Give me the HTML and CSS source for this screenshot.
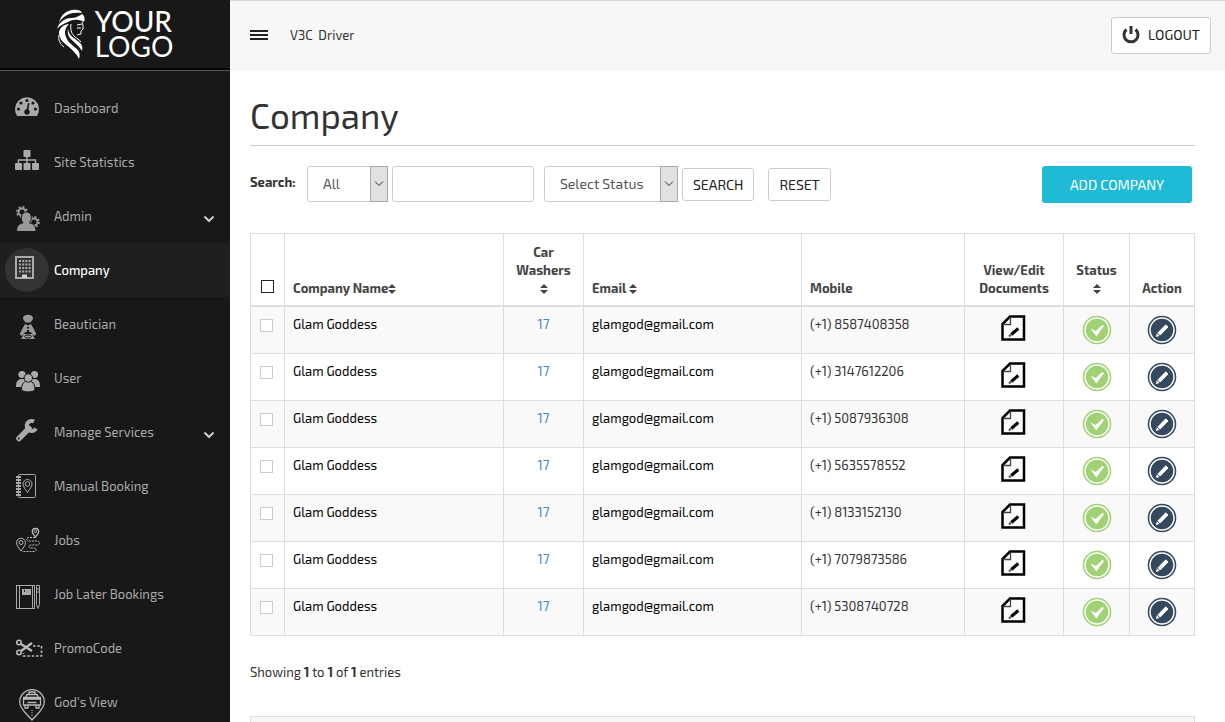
FILE: index.html
```html
<!DOCTYPE html>
<html lang="en">
<head>
<meta charset="utf-8">
<meta name="viewport" content="width=device-width, initial-scale=1">
<title>Company</title>
<link rel="stylesheet" href="styles.css">
</head>
<body>

<!-- shared icons -->
<svg class="sprite" width="0" height="0" aria-hidden="true">
  <symbol id="doc" viewBox="0 0 30 30">
    <path d="M11 1.500H25V24.500H3.500V9z" fill="#fbfbfb" stroke="#000" stroke-width="2.500"/>
    <path d="M11.500 2v7.500H4" fill="none" stroke="#444" stroke-width="1.300"/>
    <path d="M12.300 19.500l7-6" stroke="#000" stroke-width="3"/>
    <path d="M10 21.500l2-2" stroke="#555" stroke-width="2"/>
  </symbol>
  <symbol id="check" viewBox="0 0 30 30">
    <circle cx="15" cy="15" r="14.300" fill="#a0d175"/>
    <circle cx="15" cy="15" r="12" fill="none" stroke="#fff" stroke-width="1.500"/>
    <path d="M8.500 13.500l5.200 2.500L20.500 9.800 22 11 14.300 21.500z" fill="#fff"/>
  </symbol>
  <symbol id="pencil" viewBox="0 0 30 30">
    <circle cx="15" cy="15" r="14.300" fill="#34495e"/>
    <circle cx="15" cy="15" r="12" fill="none" stroke="#fff" stroke-width="1.500"/>
    <path d="M11 17.800L18.800 9.800l2.200 2.200-7.800 8z" fill="#fff" stroke="#fff"/>
    <path d="M9.800 18.300l2.700 2.700-3.600.9z" fill="#fff"/>
  </symbol>
  <symbol id="sort" viewBox="0 0 8 12">
    <path d="M4 1l4 4H0zM4 11l4-4H0z" fill="#444"/>
  </symbol>
  <symbol id="down" viewBox="0 0 12 8">
    <path d="M1.500 1.500L6 6l4.500-4.500" fill="none" stroke="currentColor" stroke-width="2"/>
  </symbol>
</svg>

<div class="layout">
<aside class="sidebar">
  <a class="logo" href="#">
    <svg width="30" height="50" viewBox="0 0 30 50" fill="#fff" aria-hidden="true">
      <path d="M2 14C4 5 11 0 20 1c3 0 4 1 5 3-7-1-14 0-18 4-3 2-4 4-5 6z"/>
      <path d="M0 20c2-7 8-11 14-11 5 0 8-2 11-4 3 2 3 5 2 8-5-3-11-3-16 0-5 2-9 4-11 7z"/>
      <path d="M3 28c-3-6 1-12 9-13-4 4-5 8-3 13 2 6 8 9 12 13 2 3 2 6 1 9-2-5-6-8-10-12-5-4-8-6-9-10z"/>
      <path d="M11 20c1 7 6 9 10 12 4 3 5 6 4 10-3-5-6-7-9-10-4-3-6-7-5-12z"/>
      <path d="M14 15c-1 7 1 10 4 13 2 2 4 2 6 5M2 26c-1 5 1 9 5 12M12 36c3 3 7 5 9 9M25 13c1 2 1 4 1 7l-2 2v3l-4 1" fill="none" stroke="#fff"/>
      <path d="M20 16l5-1M20 19l4 0" fill="none" stroke="#fff"/>
    </svg>
    <span class="logo-text">YOUR<br><span class="thin">LOGO</span></span>
  </a>

  <nav class="menu">
    <a href="#">
      <svg class="icon" viewBox="0 0 44 44"><path d="M12 30a12 12 0 1 1 20 0z" fill="#aaa"/><g fill="#181818"><circle cx="13.500" cy="23" r="1.600"/><circle cx="16" cy="17" r="1.600"/><circle cx="22" cy="14.500" r="1.600"/><circle cx="28" cy="17" r="1.600"/><circle cx="30.500" cy="23" r="1.600"/><circle cx="22" cy="26" r="2.700"/><path d="M23 17l1.500.3L23 26h-2z"/></g></svg>
      <span>Dashboard</span>
    </a>
    <a href="#">
      <svg class="icon" viewBox="0 0 44 44" fill="#aaa"><rect x="18.500" y="10" width="7" height="7" rx="1"/><rect x="10" y="23" width="7" height="7" rx="1"/><rect x="18.500" y="23" width="7" height="7" rx="1"/><rect x="27" y="23" width="7" height="7" rx="1"/><path d="M22 16v8M13.500 24v-4h17v4" fill="none" stroke="#aaa" stroke-width="1.500"/></svg>
      <span>Site Statistics</span>
    </a>
    <a href="#">
      <svg class="icon" viewBox="0 0 44 44" fill="#999"><circle cx="17" cy="18" r="3.500" fill="none" stroke="#999" stroke-width="2"/><circle cx="17" cy="18" r="5" fill="none" stroke="#999" stroke-width="1.800" stroke-dasharray="2 1.900"/><circle cx="29" cy="28" r="3.500" fill="none" stroke="#999" stroke-width="2"/><circle cx="29" cy="28" r="5" fill="none" stroke="#999" stroke-width="1.800" stroke-dasharray="2 1.900"/><path d="M11.500 37.500c0-6 3-8 6.500-8.500-3-4-2-11 3.500-11s6 7 3 11c4 .5 6.500 3 6.500 8.500z" stroke="#181818"/></svg>
      <span>Admin</span>
      <svg class="chevron" viewBox="0 0 12 8"><use href="#down"/></svg>
    </a>
    <a class="active" href="#">
      <svg class="icon" viewBox="0 0 44 44"><rect x="11" y="9" width="17" height="21" fill="none" stroke="#aaa" stroke-width="2"/><path d="M14 13h12M14 16.500h12M14 20h12M14 23.500h12" stroke="#aaa" stroke-width="2" stroke-dasharray="2 1.200"/><path d="M17 30v-3.500h5V30z" fill="#ccc"/></svg>
      <span>Company</span>
    </a>
    <a href="#">
      <svg class="icon" viewBox="0 0 44 44" fill="#999"><path d="M18 16c0-4.500 10-4.500 10 0 0 2-1.500 2.500-2.500 4.500h-5C19.500 18.500 18 18 18 16z"/><path d="M20 22l3 1.500 3-1.500 2 3.500 3.300 6.500-2.300 2-3.500-4h-5L17 34l-2.300-2 3.300-6.500z"/><path d="M19 32h8l3 5H16z"/><path d="M23 25v1.500M23 28v2" stroke="#181818" stroke-width="2"/><ellipse cx="23" cy="34.500" rx="3.500" ry="1.500" fill="none" stroke="#181818"/></svg>
      <span>Beautician</span>
    </a>
    <a href="#">
      <svg class="icon" viewBox="0 0 44 44" fill="#aaa"><circle cx="17" cy="18.500" r="3.600"/><circle cx="29.500" cy="18.500" r="3.600"/><path d="M11 31c0-6 2-8 6-8s5 2 6 8zM23 31c0-6 2-8 6-8s6 2 6 8z"/><g stroke="#181818"><path d="M16.500 34c0-7 3-9 6.700-9s6.800 2 6.800 9c-3 2.500-11 2.500-13.500 0z"/><circle cx="23.300" cy="22" r="4.200"/></g></svg>
      <span>User</span>
    </a>
    <a href="#">
      <svg class="icon" viewBox="0 0 44 44"><path d="M14 28.500l10-10" stroke="#aaa" stroke-width="5.500" stroke-linecap="round"/><path d="M29 11.500a5 5 0 1 0 2 7" fill="none" stroke="#aaa" stroke-width="4"/><circle cx="13.800" cy="28.500" r="1" fill="#181818"/></svg>
      <span>Manage Services</span>
      <svg class="chevron" viewBox="0 0 12 8"><use href="#down"/></svg>
    </a>
    <a href="#">
      <svg class="icon" viewBox="0 0 44 44" fill="none" stroke="#aaa"><rect x="13.500" y="10.500" width="17" height="23" rx="1"/><path d="M11 13h5M11 16h5M11 19h5M11 22h5M11 25h5M11 28h5M11 31h5" stroke-width="1.800"/><path d="M22.500 28.500c-2-3-4.500-6-4.500-8.500a4.500 4.500 0 0 1 9 0c0 2.500-2.500 5.500-4.500 8.500z"/><circle cx="22.500" cy="20" r="2.300"/></svg>
      <span>Manual Booking</span>
    </a>
    <a href="#">
      <svg class="icon" viewBox="0 0 44 44" fill="none" stroke="#bbb"><path d="M16 33c-2-3-4.500-5.500-4.500-8.300a4.500 4.500 0 0 1 9 0c0 2.800-2.500 5.300-4.500 8.300z"/><circle cx="16" cy="24.500" r="2"/><path d="M30.500 19c-1.500-2-3.200-3.500-3.200-5.300a3.200 3.200 0 0 1 6.400 0c0 1.800-1.700 3.300-3.200 5.300z" stroke-width="1.300"/><circle cx="30.500" cy="13.500" r="1.200"/><path d="M30 19.500h-6c-3 0-3 3.500 0 3.500h8c3.500 0 3.500 4 0 4h-6c-3 0-3 3 0 3h3c3 0 3 3.500 0 3.500H17" stroke-dasharray="2 1"/></svg>
      <span>Jobs</span>
    </a>
    <a href="#">
      <svg class="icon" viewBox="0 0 44 44" fill="none" stroke="#aaa"><rect x="11.500" y="13.500" width="18" height="23"/><path d="M14.500 13v24M27.500 13v24M31.500 13.500h3v19l-1.500 4-1.500-4zM31 17h4M31 20h4"/><rect x="17" y="17" width="9" height="6" fill="#aaa" stroke="none"/><path d="M19.500 18v2" stroke="#181818"/></svg>
      <span>Job Later Bookings</span>
    </a>
    <a href="#">
      <svg class="icon" viewBox="0 0 44 44" fill="none" stroke="#bbb" stroke-width="1.600"><circle cx="14" cy="16.500" r="2.200"/><circle cx="14" cy="26.500" r="2.200"/><path d="M16 18l11 7M16 25l11-8" stroke-width="2.300"/><path d="M28 20h8.500v10h-18v-3" stroke-dasharray="2.500 1.800"/></svg>
      <span>PromoCode</span>
    </a>
    <a href="#">
      <svg class="icon" viewBox="0 0 44 44" fill="none" stroke="#bbb" stroke-width="1.300"><path d="M27 40c-5-6-12.300-11-12.300-18a12.300 12.300 0 0 1 24.600 0C39.300 29 32 34 27 40z"/><path d="M20 18.500l2-4h10l2 4M18.500 19h17v6h-17zM24 14v-2h6v2M22.500 22.500h9M20 25v3h3v-3M31 25v3h3v-3M18 17.500h18"/><path d="M27 30v6" stroke-dasharray="1 1.500"/></svg>
      <span>God's View</span>
    </a>
  </nav>
</aside>

<div class="main">
  <header class="topbar">
    <button class="toggle" type="button" aria-label="Toggle menu"><i></i><i></i><i></i></button>
    <span class="brand">V3C&nbsp; Driver</span>
    <a class="btn logout" href="#">
      <svg width="18" height="18" viewBox="0 0 18 18" fill="none" stroke="#333" stroke-width="3" aria-hidden="true"><path d="M4.500 3.500a7 7 0 1 0 9 0"/><path d="M9 0v8"/></svg>
      LOGOUT
    </a>
  </header>

  <main class="content">
    <h1>Company</h1>

    <form class="search">
      <label class="search-label" for="keyword">Search:</label>
      <div class="select field">
        <select aria-label="Search field"><option>All</option></select>
        <span class="arrow"><svg width="10" height="6" viewBox="0 0 10 6"><path d="M1 .5l4 4 4-4" fill="none" stroke="#333"/></svg></span>
      </div>
      <input class="keyword" id="keyword" type="text">
      <div class="select status">
        <select aria-label="Status"><option>Select Status</option></select>
        <span class="arrow"><svg width="10" height="6" viewBox="0 0 10 6"><path d="M1 .5l4 4 4-4" fill="none" stroke="#333"/></svg></span>
      </div>
      <div class="buttons">
        <button class="btn" type="submit">SEARCH</button>
        <button class="btn" type="reset">RESET</button>
      </div>
      <a class="add" href="#">ADD COMPANY</a>
    </form>

    <table class="list">
      <colgroup>
        <col class="c-check"><col class="c-name"><col class="c-wash"><col class="c-mail"><col class="c-phone"><col class="c-docs"><col class="c-status"><col class="c-action">
      </colgroup>
      <thead>
        <tr>
          <th class="center"><input type="checkbox" aria-label="Select all"></th>
          <th>Company Name<svg class="sort"><use href="#sort"/></svg></th>
          <th class="center">Car Washers <svg class="sort"><use href="#sort"/></svg></th>
          <th>Email <svg class="sort"><use href="#sort"/></svg></th>
          <th>Mobile</th>
          <th class="center">View/Edit Documents</th>
          <th class="center">Status <svg class="sort"><use href="#sort"/></svg></th>
          <th class="center">Action</th>
        </tr>
      </thead>
      <tbody>
        <tr>
          <td><input type="checkbox" aria-label="Select row"></td>
          <td class="dark">Glam Goddess</td>
          <td class="center"><a href="#">17</a></td>
          <td class="dark">glamgod@gmail.com</td>
          <td>(+1) 8587408358</td>
          <td><svg class="act"><use href="#doc"/></svg></td>
          <td><svg class="act"><use href="#check"/></svg></td>
          <td><svg class="act"><use href="#pencil"/></svg></td>
        </tr>
        <tr>
          <td><input type="checkbox" aria-label="Select row"></td>
          <td class="dark">Glam Goddess</td>
          <td class="center"><a href="#">17</a></td>
          <td class="dark">glamgod@gmail.com</td>
          <td>(+1) 3147612206</td>
          <td><svg class="act"><use href="#doc"/></svg></td>
          <td><svg class="act"><use href="#check"/></svg></td>
          <td><svg class="act"><use href="#pencil"/></svg></td>
        </tr>
        <tr>
          <td><input type="checkbox" aria-label="Select row"></td>
          <td class="dark">Glam Goddess</td>
          <td class="center"><a href="#">17</a></td>
          <td class="dark">glamgod@gmail.com</td>
          <td>(+1) 5087936308</td>
          <td><svg class="act"><use href="#doc"/></svg></td>
          <td><svg class="act"><use href="#check"/></svg></td>
          <td><svg class="act"><use href="#pencil"/></svg></td>
        </tr>
        <tr>
          <td><input type="checkbox" aria-label="Select row"></td>
          <td class="dark">Glam Goddess</td>
          <td class="center"><a href="#">17</a></td>
          <td class="dark">glamgod@gmail.com</td>
          <td>(+1) 5635578552</td>
          <td><svg class="act"><use href="#doc"/></svg></td>
          <td><svg class="act"><use href="#check"/></svg></td>
          <td><svg class="act"><use href="#pencil"/></svg></td>
        </tr>
        <tr>
          <td><input type="checkbox" aria-label="Select row"></td>
          <td class="dark">Glam Goddess</td>
          <td class="center"><a href="#">17</a></td>
          <td class="dark">glamgod@gmail.com</td>
          <td>(+1) 8133152130</td>
          <td><svg class="act"><use href="#doc"/></svg></td>
          <td><svg class="act"><use href="#check"/></svg></td>
          <td><svg class="act"><use href="#pencil"/></svg></td>
        </tr>
        <tr>
          <td><input type="checkbox" aria-label="Select row"></td>
          <td class="dark">Glam Goddess</td>
          <td class="center"><a href="#">17</a></td>
          <td class="dark">glamgod@gmail.com</td>
          <td>(+1) 7079873586</td>
          <td><svg class="act"><use href="#doc"/></svg></td>
          <td><svg class="act"><use href="#check"/></svg></td>
          <td><svg class="act"><use href="#pencil"/></svg></td>
        </tr>
        <tr>
          <td><input type="checkbox" aria-label="Select row"></td>
          <td class="dark">Glam Goddess</td>
          <td class="center"><a href="#">17</a></td>
          <td class="dark">glamgod@gmail.com</td>
          <td>(+1) 5308740728</td>
          <td><svg class="act"><use href="#doc"/></svg></td>
          <td><svg class="act"><use href="#check"/></svg></td>
          <td><svg class="act"><use href="#pencil"/></svg></td>
        </tr>
      </tbody>
    </table>

    <p class="showing">Showing <b>1</b> to <b>1</b> of <b>1</b> entries</p>
    <div class="notes"></div>
  </main>
</div>
</div>

</body>
</html>
```
FILE: styles.css
```css
* {
  box-sizing: border-box;
}

html {
  scrollbar-width: none;
}

body {
  margin: 0;
  background: #fff;
  color: #333;
  font: 13px/20px "Exo 2", Roboto, sans-serif;
}

a {
  text-decoration: none;
}

.sprite {
  position: absolute;
}

.layout {
  display: grid;
  grid-template-columns: 230px 1fr;
}

/* sidebar */
.sidebar {
  position: sticky;
  top: 0;
  height: 100vh;
  overflow: hidden auto;
  scrollbar-width: none;
  background: #181818;
}

.logo {
  display: flex;
  justify-content: center;
  align-items: center;
  gap: 8px;
  height: 70px;
  border-bottom: 2px solid #000;
  color: #fff;
}

.logo-text {
  font: 500 28px/25px Lato, sans-serif;
}

.thin {
  font-weight: 400;
}

.menu {
  border-top: 1px solid #555;
  padding-top: 10px;
}

.menu a {
  display: flex;
  align-items: center;
  gap: 5px;
  height: 54px;
  padding: 0 15px 0 5px;
  color: #aaa;
}

.menu .active {
  background: #1f1f1f;
  color: #fff;
  font-weight: 500;
}

.icon {
  flex: none;
  width: 44px;
  height: 44px;
  border-radius: 50%;
}

.active .icon {
  background: #333;
}

.chevron {
  width: 12px;
  height: 8px;
  margin: 6px 0 0 auto;
  color: #ccc;
}

/* top bar */
.topbar {
  display: flex;
  align-items: center;
  height: 71px;
  padding: 0 14px 2px 20px;
  border-top: 1px solid #d8d8d8;
  background: #f7f7f7;
}

.toggle {
  display: flex;
  flex-direction: column;
  gap: 2px;
  width: 18px;
  padding: 0;
  border: 0;
  background: none;
}

.toggle i {
  height: 2px;
  background: #222;
}

.brand {
  margin-left: 22px;
}

.btn {
  display: flex;
  align-items: center;
  justify-content: center;
  height: 33px;
  padding: 0 10px;
  border: 1px solid #ccc;
  border-radius: 3px;
  background: #fff;
  color: #222;
  font: inherit;
  font-size: 14px;
}

.logout {
  gap: 8px;
  height: 37px;
  margin-left: auto;
}

/* content */
.content {
  padding: 20px 30px 40px 20px;
}

h1 {
  margin: 0 0 20px;
  padding: 4px 0 10px;
  border-bottom: 1px solid #ccc;
  font-size: 35px;
  font-weight: 400;
  line-height: 40px;
}

.search {
  display: flex;
  align-items: flex-start;
  margin-bottom: 30px;
  padding-right: 3px;
}

.search-label {
  width: 57px;
  padding-top: 6px;
  font-weight: 700;
}

.select {
  position: relative;
}

.field {
  width: 81px;
}

.status {
  width: 134px;
}

.select select,
.keyword {
  width: 100%;
  height: 36px;
  padding: 0 15px;
  border: 1px solid #ccc;
  border-radius: 3px;
  background: #fff;
  color: #555;
  font: inherit;
  font-size: 14px;
  appearance: none;
}

/* drop-down handle drawn over the right end of the select */
.arrow {
  position: absolute;
  top: 0;
  right: 0;
  display: flex;
  align-items: center;
  justify-content: center;
  width: 18px;
  height: 36px;
  border: 1px solid #aaa;
  background: #e1e1e1;
  pointer-events: none;
}

.keyword {
  width: 142px;
  margin: 0 10px 0 4px;
}

.buttons {
  display: flex;
  gap: 14px;
  padding: 2px 0 0 4px;
}

.add {
  margin-left: auto;
  width: 150px;
  border-radius: 3px;
  background: #1fbad6;
  color: #fff;
  font-size: 14px;
  line-height: 37px;
  text-align: center;
}

/* table */
.list {
  width: 100%;
  border-collapse: collapse;
  table-layout: fixed;
}

.c-check { width: 34px; }
.c-wash { width: 80px; }
.c-mail { width: 218px; }
.c-phone { width: 163px; }
.c-docs { width: 99px; }
.c-status { width: 66px; }
.c-action { width: 65px; }

.list th,
.list td {
  padding: 8px;
  border: 1px solid #ddd;
  line-height: 18px;
  text-align: left;
  vertical-align: top;
}

.list th {
  padding-top: 9px;
  border-bottom-width: 2px;
  color: #444;
  vertical-align: bottom;
}

.list .center {
  text-align: center;
}

tbody tr:nth-child(odd) {
  background: #f9f9f9;
}

.list a {
  color: #428bca;
}

.list .dark {
  color: #000;
}

.sort {
  width: 8px;
  height: 12px;
  vertical-align: -2px;
}

.act {
  display: block;
  width: 30px;
  height: 30px;
  margin: 0 auto;
}

input[type="checkbox"] {
  display: block;
  width: 13px;
  height: 13px;
  margin: 4px 1px;
  border: 1px solid #ccc;
  background: #fff;
  appearance: none;
}

th input[type="checkbox"] {
  margin: 4px auto;
  border-color: #222;
}

input[type="checkbox"]:checked {
  background: #428bca;
}

.showing {
  margin: 26px 0 34px;
}

.notes {
  min-height: 80px;
  border: 1px solid #e0e0e0;
  background: #f5f7f7;
}
```
